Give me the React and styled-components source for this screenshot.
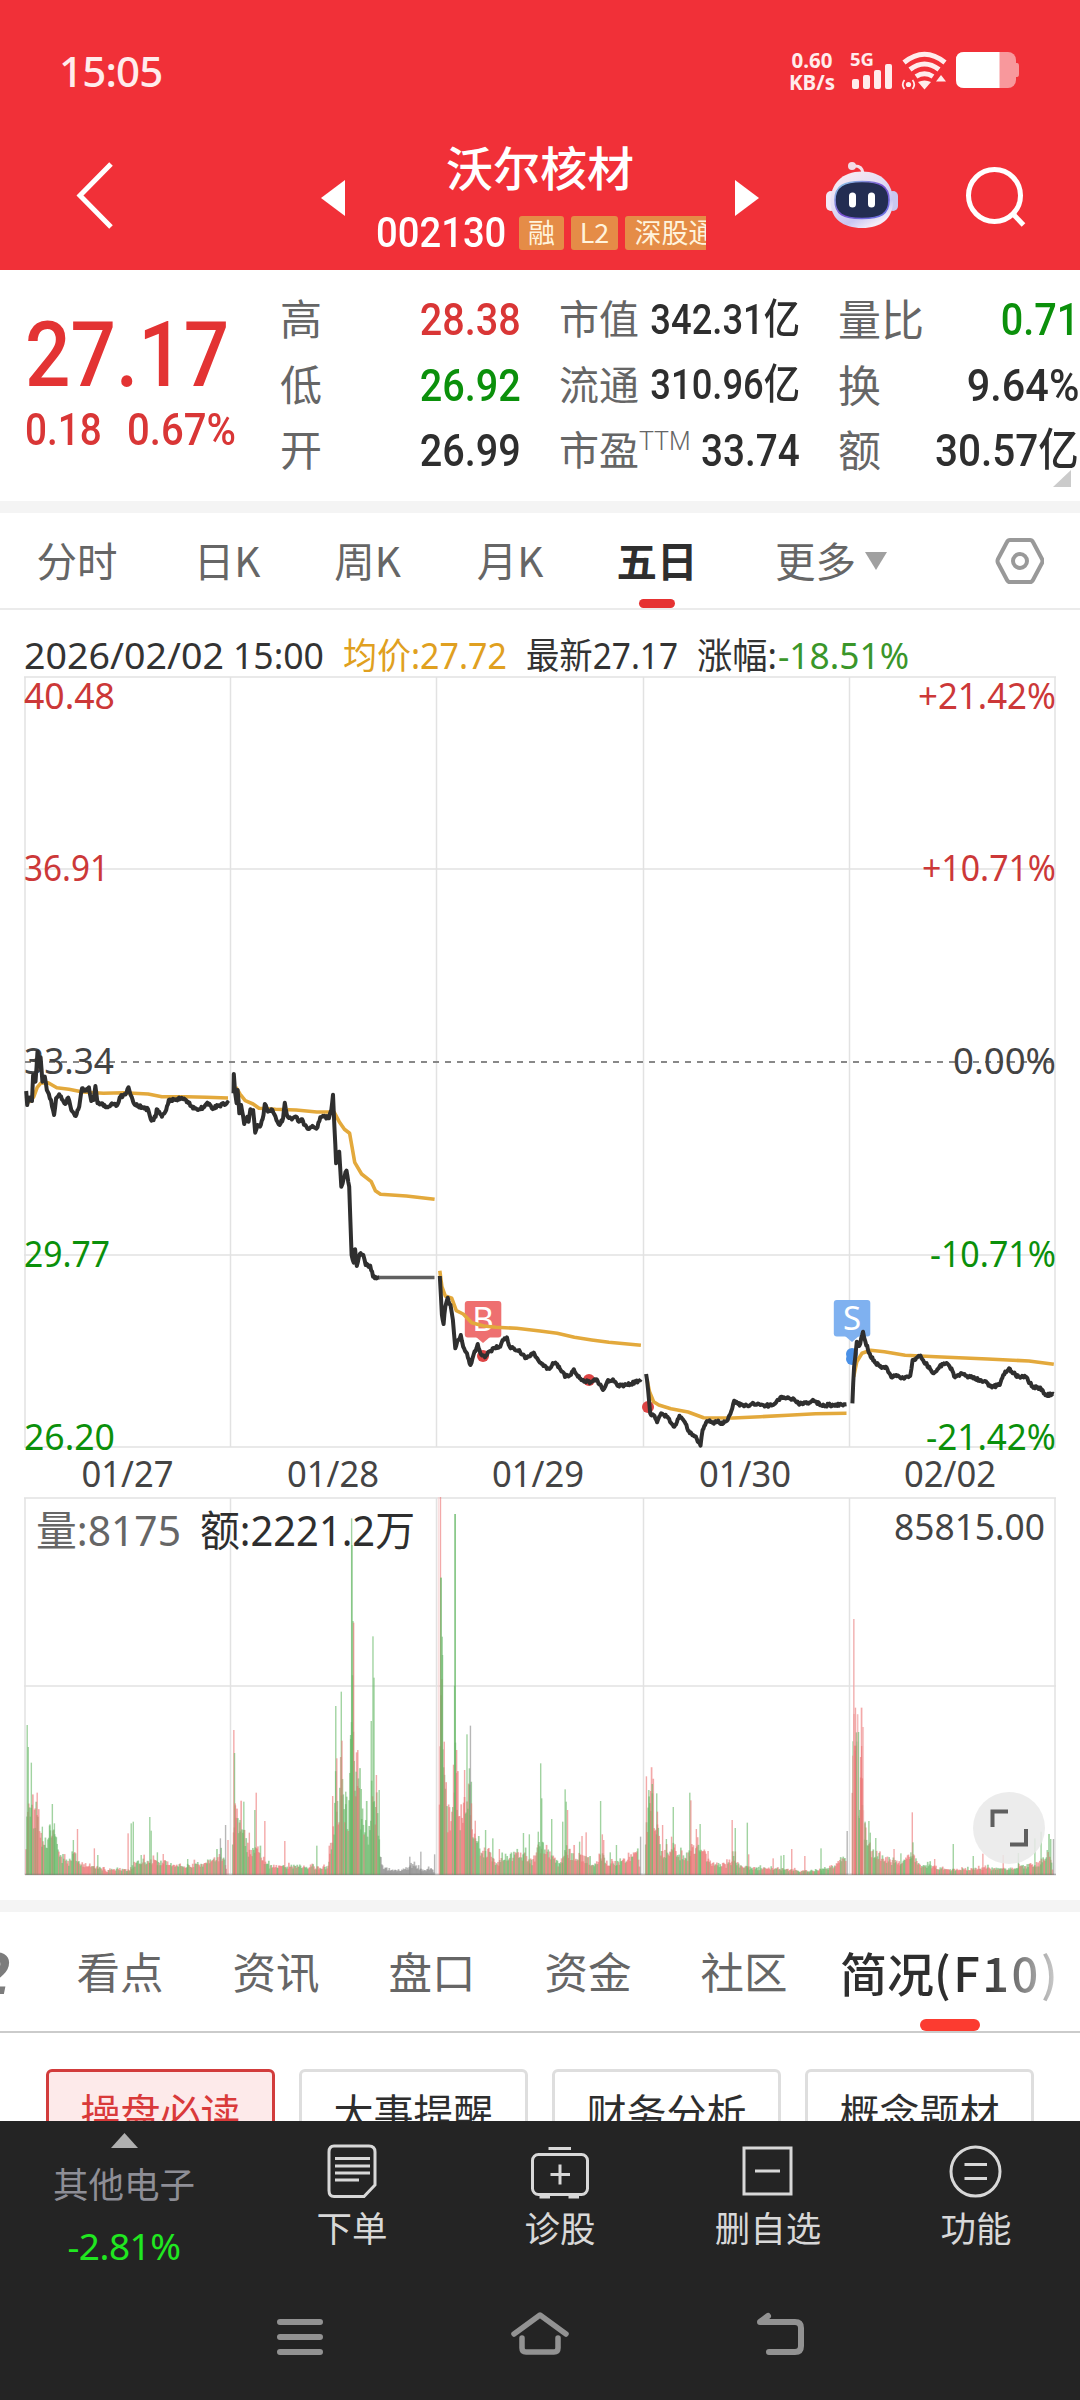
import styled, { createGlobalStyle, css } from 'styled-components'

const GlobalStyle = createGlobalStyle`
  * {
    box-sizing: border-box;
  }

  body {
    margin: 0;
    background: #fff;
    font-family: 'Noto Sans', 'Noto Sans CJK SC', sans-serif;
    color: #333;
  }
`

const RED = '#d93636'
const GREEN = '#0b900b'
const DARK = '#2e2e2e'

// ---------- shared ----------

// digits are narrower than Roboto, so numbers are squeezed horizontally
const Num = styled.span`
  display: inline-block;
  flex: none;
  white-space: nowrap;
  font-family: Roboto, 'Noto Sans CJK SC', sans-serif;
  font-weight: ${({ weight = 500 }) => weight};
  font-size: ${({ size = 45 }) => size}px;
  line-height: 1;
  color: ${({ color = 'inherit' }) => color};
  transform: scaleX(${({ squeeze = 0.88 }) => squeeze});
  transform-origin: ${({ origin = 'left' }) => origin} center;
`

const Page = styled.div`
  width: 1080px;
  height: 2400px;
  overflow: hidden;
  display: flex;
  flex-direction: column;
  background: #fff;
`

const Divider = styled.div`
  flex: none;
  height: 12px;
  background: #f4f4f4;
`

// ---------- header ----------

const Header = styled.header`
  flex: none;
  height: 270px;
  background: #f13038;
  color: #fff;
`

const StatusBar = styled.div`
  height: 122px;
  padding: 19px 60px 0 59px;
  display: flex;
  align-items: center;
  color: #ffecec;
`

const Clock = styled.div`
  width: 730px;
  font-size: 42px;
  font-weight: 500;
  line-height: 60px;
  letter-spacing: -0.8px;
`

const NetSpeed = styled.div`
  width: 46px;
  margin-right: 13px;
  font-size: 20.5px;
  font-weight: 700;
  line-height: 22px;
  text-align: center;
  white-space: nowrap;
`

const TitleBar = styled.div`
  height: 148px;
  display: grid;
  grid-template-columns: 321px 24px 31px 330px 29px 24px 66px 72px 67px 60px;
  align-items: start;
`

const BackIcon = styled.svg`
  margin: 38px 0 0 74px;
`

const StepIcon = styled.svg`
  margin-top: 58px;
`

const RobotIcon = styled.svg`
  margin-top: 38px;
`

const SearchIcon = styled.svg`
  margin-top: 42px;
`

const StockTitle = styled.div`
  text-align: center;
`

const StockName = styled.div`
  padding: 12px 2px 0 0;
  font-family: 'Noto Sans CJK SC', sans-serif;
  font-size: 47px;
  font-weight: 500;
  line-height: 64px;
`

const StockCode = styled.div`
  height: 38px;
  margin-top: 16px;
  padding-left: 0;
  display: flex;
  align-items: center;
  overflow: hidden;
`

const CodeCell = styled.div`
  flex: none;
  width: 143px;
  display: flex;
`

const Badge = styled.span`
  flex: none;
  width: ${({ width }) => width}px;
  height: 34px;
  margin-right: 7px;
  border-radius: 3px;
  background: #e58c47;
  color: #fff3dc;
  font-family: 'Noto Sans CJK SC', sans-serif;
  font-size: 27px;
  line-height: 32px;
  text-align: center;
  white-space: nowrap;
`

const StatusIcons = () => (
  <svg width="172" height="52" viewBox="849 46 172 52">
    <g fill="#ffecec">
      <text x="851" y="67" fontSize="17.500" fontWeight="700" textLength="24" lengthAdjust="spacingAndGlyphs">
        5G
      </text>
      <rect x="853" y="80" width="7" height="10" rx="2" />
      <rect x="864" y="76" width="7" height="14" rx="2" />
      <rect x="875" y="71" width="7" height="19" rx="2" />
      <rect x="886" y="65" width="7" height="25" rx="2" />
      <path d="M919 83Q925.500 80 932 83L925.500 90.500Z" />
      <path d="M942 76L947 82.500H937Z" />
      <circle cx="909.500" cy="85.500" r="2.600" />
    </g>
    <g fill="none" stroke="#ffecec" strokeWidth="5">
      <path d="M905 63.500Q925.500 47 946 63.500" />
      <path d="M911 70.500Q925.500 59.500 940 70.500" />
      <path d="M917 77.500Q925.500 72 934 77.500" />
      <path strokeWidth="1.700" d="M905.500 81Q902 85.500 905.500 90M913.500 81Q917 85.500 913.500 90" />
    </g>
    <rect x="957" y="53" width="60" height="36" rx="8" fill="#fff" fillOpacity="0.5" />
    <path d="M1017 64h1q2 0 2 3v8q0 3-2 3h-1z" fill="#fff" fillOpacity="0.5" />
    <path d="M965 53H1000.500V89H965Q957 89 957 81V61Q957 53 965 53Z" fill="#fff" />
  </svg>
)

const Robot = () => (
  <RobotIcon width="74" height="70" viewBox="824 160 74 70">
    <defs>
      <linearGradient id="shell" x1="0" y1="0" x2="0.6" y2="1">
        <stop offset="0" stopColor="#ffeef0" />
        <stop offset="0.5" stopColor="#e2dcf4" />
        <stop offset="0.8" stopColor="#c9c6f2" />
        <stop offset="1" stopColor="#f4ebf8" />
      </linearGradient>
      <linearGradient id="rim" x1="0" y1="0" x2="1" y2="1">
        <stop offset="0" stopColor="#8fd6ea" />
        <stop offset="0.5" stopColor="#7a4fd0" />
        <stop offset="1" stopColor="#6b7be8" />
      </linearGradient>
    </defs>
    <path d="M852 166Q861 165 862 173" fill="none" stroke="#f6dfe8" strokeWidth="3" />
    <circle cx="851" cy="166" r="4" fill="#f3dbe6" />
    <rect x="825" y="191" width="10" height="20" rx="5" fill="#f3e9f6" />
    <rect x="887" y="191" width="10" height="20" rx="5" fill="#c9c8f0" />
    <path d="M861 171.500C881 171.500 892 184 892 201C892 219 880 228 861 228C842 228 829.500 219 829.500 201C829.500 184 841 171.500 861 171.500Z" fill="url(#shell)" />
    <path d="M861 181.500C879 181.500 888 186 888 200C888 214 880 218.500 861 218.500C842 218.500 834 214 834 200C834 186 843 181.500 861 181.500Z" fill="#232d52" stroke="url(#rim)" strokeWidth="1.600" />
    <rect x="848" y="192.500" width="7" height="15" rx="3.500" fill="#fff" />
    <rect x="867" y="192.500" width="7" height="15" rx="3.500" fill="#fff" />
  </RobotIcon>
)

// ---------- quote ----------

const Quote = styled.section`
  flex: none;
  height: 231px;
  display: flex;
  padding-top: 17px;
`

const PriceBox = styled.div`
  width: 280px;
  padding: 24px 0 0 25px;
`

const PriceChange = styled.div`
  display: flex;
  margin-top: 6px;
`

const ChangeCell = styled.div`
  width: 102px;
`

const QuoteColumn = styled.div`
  width: 241px;
  margin-right: ${({ gap = 0 }) => gap}px;
`

const QuoteRow = styled.div`
  height: 65.5px;
  display: flex;
  align-items: center;
`

const QuoteLabel = styled.span`
  flex: none;
  display: flex;
  margin-top: -5px;
  font-family: 'Noto Sans CJK SC', sans-serif;
  font-size: ${({ size = 42 }) => size}px;
  line-height: 60px;
  color: #666;
`

const QuoteValue = styled.div`
  flex: 1;
  min-width: 0;
  display: flex;
  justify-content: flex-end;
`

const Super = styled.span`
  font-family: Roboto, sans-serif;
  font-size: 25px;
  font-weight: 300;
  line-height: 47px;
`

const CornerMark = styled.svg`
  display: block;
  margin: -14px 8px 0 auto;
`

const quoteColumns = [
  {
    gap: 38,
    labelSize: 42,
    rows: [
      { label: '高', value: '28.38', color: RED },
      { label: '低', value: '26.92', color: GREEN },
      { label: '开', value: '26.99' },
    ],
  },
  {
    gap: 38,
    labelSize: 40,
    rows: [
      { label: '市值', value: '342.31亿', size: 42, squeeze: 0.865 },
      { label: '流通', value: '310.96亿', size: 42, squeeze: 0.865 },
      { label: '市盈', sup: 'TTM', value: '33.74', squeeze: 0.86 },
    ],
  },
  {
    gap: 0,
    labelSize: 43,
    rows: [
      { label: '量比', value: '0.71', color: GREEN },
      { label: '换', value: '9.64%', squeeze: 0.92 },
      { label: '额', value: '30.57亿', squeeze: 0.9 },
    ],
  },
]

// ---------- period tabs ----------

const PeriodTabs = styled.nav`
  flex: none;
  height: 97px;
  display: flex;
  border-bottom: 2px solid #ebebeb;
  padding-left: 7px;
`

const PeriodTab = styled.div`
  width: ${({ width }) => width}px;
  display: flex;
  flex-direction: column;
  align-items: center;
  justify-content: space-between;
  padding-top: 17px;
  font-family: 'Noto Sans CJK SC', sans-serif;
  font-size: 40.5px;
  line-height: 60px;
  white-space: nowrap;
  color: #666;
  ${({ active }) =>
    active &&
    css`
      font-weight: 600;
      color: ${DARK};

      &::after {
        content: '';
        flex: none;
        width: 36px;
        height: 9px;
        border-radius: 5px;
        background: #e63232;
      }
    `}
`

const MoreArrow = styled.svg`
  margin: 39px 107px 0 9px;
`

const SettingsIcon = styled.svg`
  margin-top: 22px;
`

const periods = [
  { label: '分时', width: 140 },
  { label: '日K', width: 160 },
  { label: '周K', width: 121 },
  { label: '月K', width: 164 },
  { label: '五日', width: 130, active: true },
]

// ---------- chart ----------

const ChartBlock = styled.section`
  flex: none;
  height: 1290px;

  & svg {
    display: block;
  }
`

// Line points use a grid finer than the screen: 2.904 units per px across, 3 per px down
const UX = 2.9037
const toX = (x) => x / UX
const toY = (y) => 1000 + y / 3
const parse = (text, dx = 0, dy = 0) =>
  text.split(' ').map((pair) => {
    const [x, y] = pair.split(',').map(Number)
    return [x + dx, y + dy]
  })

const random = (seed) => () => {
  seed = (seed * 16807) % 2147483647
  return seed / 2147483647
}

const toPath = (points) => points.map(([x, y], i) => `${i ? 'L' : 'M'}${toX(x).toFixed(1)} ${toY(y).toFixed(1)}`).join('')

// minute-level jitter between the key points
const jagged = (points, seed) => {
  const next = random(seed)
  const result = []
  points.forEach(([x, y], i) => {
    result.push([x, y])
    const to = points[i + 1]
    if (!to) return
    const steps = Math.floor((to[0] - x) / 2.5)
    for (let s = 1; s < steps; s++) {
      const k = s / steps
      result.push([x + (to[0] - x) * k, y + (to[1] - y) * k + (next() - 0.5) * 9])
    }
  })
  return result
}

const RX = 1568
const RY = 720

const priceDays = [
  parse(
    '76,273 79,315 83,295 93,303 96,225 103,245 109,155 114,200 118,172 123,245 130,230 136,270 148,300 157,345 163,295 172,283 182,300 190,312 198,293 207,330 220,348 230,320 238,265 248,272 258,262 265,303 272,300 277,258 283,310 295,310 313,322 325,310 340,316 350,290 365,283 373,262 382,290 392,315 415,322 430,328 440,362 452,350 455,328 470,350 480,335 490,300 510,300 525,295 540,300 555,318 575,330 590,322 602,308 615,325 635,316 663,310'
  ),
  parse(
    '678,280 679,222 683,280 687,310 690,270 695,340 700,315 709,372 718,350 722,365 727,328 735,330 741,398 748,375 755,380 765,345 769,312 778,335 788,328 800,350 812,375 822,355 827,308 833,345 845,355 860,350 868,365 875,358 885,375 895,387 910,380 922,382 930,352 945,350 955,355 962,330 967,284 971,380 976,490 985,455 991,560 998,535 1006,512 1014,560 1021,765 1027,788 1031,748 1036,798 1045,762 1055,765 1062,795 1075,797 1083,830 1102,832'
  ),
  [
    ...parse(
      '1277,828 1283,945 1288,972 1293,920 1300,893 1308,915 1315,960 1322,1045 1330,1020 1338,1005 1345,1040 1356,1060 1366,1095 1375,1065 1387,1032 1395,1060 1408,1072 1420,1055 1435,1045 1450,1040 1465,1015 1472,1012 1480,1040 1495,1050 1510,1055 1525,1075 1540,1068 1550,1058 1560,1075'
    ),
    ...parse('0,368 10,378 25,385 35,375 45,368 60,390 75,410 90,405 98,388 110,410 128,425 150,425 165,418 183,450 195,425 212,418 225,437 245,435 265,432 293,418', RX, RY),
  ],
  parse(
    '308,402 314,450 320,520 330,525 340,547 352,520 370,530 390,560 405,527 420,545 435,580 450,588 466,617 472,570 485,543 500,548 515,545 530,552 545,540 555,515 564,482 575,492 600,496 620,490 640,495 665,497 685,488 700,470 715,475 735,475 750,490 775,490 795,483 820,498 850,494 890,493',
    RX,
    RY
  ),
  parse(
    '907,490 912,380 920,305 927,318 938,275 945,305 960,350 975,370 990,382 1003,380 1020,412 1035,405 1050,415 1075,408 1082,360 1105,347 1120,370 1143,400 1160,380 1178,370 1195,385 1205,412 1220,402 1245,410 1280,420 1315,440 1335,435 1345,405 1362,385 1375,400 1390,410 1410,410 1430,440 1450,443 1470,465 1492,462',
    RX,
    RY
  ),
]

const averageDays = [
  parse('76,290 85,305 98,290 108,262 118,250 140,248 165,263 200,268 240,276 300,280 360,278 430,282 470,290 540,290 600,292 662,294'),
  parse('685,262 697,282 712,302 735,312 752,325 800,328 860,330 920,336 970,336 985,365 1000,388 1015,400 1022,440 1030,487 1050,522 1078,545 1090,572 1105,583 1180,588 1262,598'),
  [
    ...parse('1277,812 1283,860 1293,888 1312,895 1325,932 1345,942 1370,968 1405,978 1440,982 1500,985'),
    ...parse('0,273 50,280 100,292 150,300 200,307 293,316', RX, RY),
  ],
  parse('311,420 318,455 330,485 345,495 380,506 430,516 475,533 560,534 640,530 720,526 800,521 890,520', RX, RY),
  parse('911,410 920,365 935,340 960,331 1000,335 1060,346 1150,350 1300,357 1420,363 1492,373', RX, RY),
]

const gridX = [25, 230.5, 436.5, 643.5, 849.5, 1055]
const priceLevels = [
  { price: '40.48', change: '+21.42%', y: 709, color: '#cc3838', w: 91, cw: 138 },
  { price: '36.91', change: '+10.71%', y: 881, color: '#cc3838', w: 85, cw: 134 },
  { price: '33.34', change: '0.00%', y: 1074, color: '#444', w: 90, cw: 103 },
  { price: '29.77', change: '-10.71%', y: 1267, color: GREEN, w: 86, cw: 126 },
  { price: '26.20', change: '-21.42%', y: 1450, color: GREEN, w: 91, cw: 130 },
]
const dates = [
  ['01/27', 127.5],
  ['01/28', 333],
  ['01/29', 538],
  ['01/30', 745],
  ['02/02', 950],
]
const legend = [
  { text: '2026/02/02', x: 24, w: 200, color: '#333' },
  { text: '15:00', x: 233, w: 91, color: '#333' },
  { text: '均价:27.72', x: 343, w: 164, color: '#e0a020' },
  { text: '最新27.17', x: 526, w: 152, color: '#333' },
  { text: '涨幅:', x: 697, w: 80, color: '#333' },
  { text: '-18.51%', x: 778, w: 131, color: '#3a962a' },
]

const ChartText = styled.text`
  font-family: 'Noto Sans', 'Noto Sans CJK SC', sans-serif;
  font-size: ${({ $size = 36 }) => $size}px;
`

const Label = ({ x, y, w, color = '#444', size, anchor, children }) => (
  <ChartText x={x} y={y} fill={color} $size={size} textAnchor={anchor} textLength={w} lengthAdjust="spacingAndGlyphs">
    {children}
  </ChartText>
)

const Flag = ({ x, y, color, letter }) => (
  <g>
    <rect x={x - 18.2} y={y} width="36.500" height="36.500" rx="3" fill={color} />
    <path d={`M${x - 7} ${y + 36}L${x} ${y + 42}L${x + 7} ${y + 36}Z`} fill={color} />
    <ChartText x={x} y={y + 30} $size={33} fill="#fff" textAnchor="middle">
      {letter}
    </ChartText>
  </g>
)

const PriceChart = () => (
  <svg width="1080" height="887" viewBox="0 610 1080 887">
    {legend.map(({ text, x, w, color }) => (
      <Label key={text} x={x} y={668.5} w={w} color={color} size={36}>
        {text}
      </Label>
    ))}
    <g stroke="#e9e9e9" strokeWidth="1.500">
      {[677, 869, 1255, 1447].map((y) => (
        <line key={y} x1="24" x2="1056" y1={y} y2={y} strokeWidth="2" />
      ))}
      {gridX.map((x) => (
        <line key={x} x1={x} x2={x} y1="677" y2="1447" stroke="#e2e2e2" />
      ))}
    </g>
    <line x1="25" x2="1055" y1="1062" y2="1062" stroke="#888" strokeWidth="2" strokeDasharray="6 6" />
    {priceLevels.map(({ price, change, y, color, w, cw }) => (
      <g key={price}>
        <Label x={24} y={y} w={w} color={color}>
          {price}
        </Label>
        <Label x={1056} y={y} w={cw} color={color} anchor="end">
          {change}
        </Label>
      </g>
    ))}
    <Flag x={483} y={1301} color="#ee7070" letter="B" />
    <Flag x={852} y={1300} color="#7fb1f0" letter="S" />
    <g fill="#dd4444">
      <circle cx="483" cy="1356" r="6" />
      <circle cx="589" cy="1380" r="6" />
      <circle cx="648" cy="1407" r="6" />
    </g>
    <g fill="#4a90e6">
      <circle cx="852" cy="1354" r="6" />
      <circle cx="852" cy="1359" r="6" />
    </g>
    {averageDays.map((day, i) => (
      <path key={i} d={toPath(day)} fill="none" stroke="#e3a93c" strokeWidth="3.600" strokeLinejoin="round" />
    ))}
    {priceDays.map((day, i) => (
      <path key={i} d={toPath(jagged(day, 71 + i))} fill="none" stroke="#2f2f2f" strokeWidth="4" strokeLinejoin="round" />
    ))}
    <line x1="379" x2="434.500" y1="1277.500" y2="1277.500" stroke="#606060" strokeWidth="3.600" />
    {dates.map(([date, x]) => (
      <Label key={date} x={x} y={1487} w={92} anchor="middle">
        {date}
      </Label>
    ))}
  </svg>
)

// envelope: "x,height"; spikes: "x,height,tone" (g green, r red, n neutral, l light)
const volumeDays = [
  {
    tones: [[75, 0.5], [160, 0.35], [215, 0.5], [230, 0.9], [300, 0.6], [330, 0.7], [400, 0.3], [440, 0.75], [540, 0.35], [590, 0.6], [660, 0.6]],
    envelope:
      '76,110 82,200 95,180 108,205 120,110 135,95 150,120 160,130 170,60 200,35 215,80 230,35 280,25 310,12 330,18 375,15 400,40 430,45 450,40 490,35 540,28 590,35 620,45 650,60 658,12',
    spikes:
      '79,450,g 82,384,g 91,337,g 108,247,r 102,200,r 152,213,g 158,155,g 145,152,g 123,145,g 213,105,g 225,138,r 274,80,r 284,60,g 372,125,r 381,155,g 387,160,g 410,60,g 435,174,g 439,133,g 457,68,g 474,63,r 545,48,g 655,150,n 640,110,n 662,105,r',
  },
  {
    tones: [[676, 0.6], [705, 0.3], [750, 0.7], [790, 0.5], [835, 0.5], [870, 0.3], [910, 0.7], [965, 0.35], [1025, 0.3], [1050, 0.2], [1090, 0.3]],
    envelope:
      '676,130 682,200 695,150 705,140 720,80 735,70 745,90 757,60 780,28 830,25 870,28 900,22 950,22 965,100 975,220 985,160 992,260 1003,190 1010,150 1018,380 1025,380 1035,290 1048,190 1060,160 1072,110 1080,280 1088,180 1095,240 1103,70 1110,25 1140,12 1180,20 1200,30 1230,12 1255,20 1260,10',
    spikes:
      '679,435,r 681,366,g 683,215,r 708,220,g 697,165,g 724,127,r 744,247,r 740,195,g 769,162,r 827,102,r 920,88,g 956,88,r 966,237,r 975,507,g 978,350,r 991,550,g 993,403,r 1004,250,g 1018,420,g 1021,1070,g 1022,990,g 1025,762,g 1027,757,r 1039,375,r 1034,310,g 1049,258,g 1078,462,g 1083,716,g 1086,592,g 1093,300,r 1101,255,g 1190,55,n 1222,70,n 1262,62,n',
  },
  {
    tones: [[1276, 0.4], [1300, 0.35], [1330, 0.6], [1345, 0.4], [1370, 0.8], [1390, 0.4], [1430, 0.7], [1470, 0.35], [1520, 0.6], [1568, 0.5], [1600, 0.7], [1625, 0.2], [1640, 0.5], [1690, 0.7], [1720, 0.4], [1745, 0.6], [1800, 0.6], [1840, 0.8]],
    envelope:
      '1276,300 1282,600 1290,320 1300,170 1312,200 1322,360 1330,190 1345,180 1356,230 1366,240 1375,120 1395,65 1420,70 1440,30 1470,55 1490,60 1520,60 1545,40 1568,90 1580,90 1600,60 1625,30 1645,80 1660,60 1690,55 1710,45 1725,22 1745,65 1765,32 1800,40 1830,50 1852,70 1858,12',
    spikes:
      '1273,1134,l 1279,1134,r 1280,892,g 1281,892,g 1284,715,g 1285,660,g 1290,400,r 1321,1083,g 1322,1083,g 1320,568,g 1326,375,r 1349,315,r 1356,422,g 1363,320,g 1366,448,n 1369,215,r 1380,163,r 1410,135,g 1431,110,g 1450,78,r 1520,126,g 1537,122,g 1563,130,g 1570,335,g 1573,230,g 1602,168,g 1634,160,g 1641,257,g 1644,220,g 1648,195,r 1683,100,g 1690,117,r 1702,128,r 1744,222,g 1749,122,r 1753,105,r 1772,68,g 1790,90,g 1860,115,n',
  },
  {
    tones: [[1875, 0.35], [1915, 0.6], [1935, 0.4], [1958, 0.8], [1995, 0.4], [2010, 0.6], [2025, 0.4], [2055, 0.8], [2130, 0.6], [2170, 0.4], [2200, 0.5], [2290, 0.6], [2370, 0.4], [2420, 0.6]],
    envelope:
      '1875,130 1881,190 1893,220 1903,130 1910,150 1918,70 1943,70 1956,110 1968,50 1998,60 2008,90 2028,80 2038,90 2058,40 2108,30 2133,50 2148,25 2188,20 2268,18 2328,12 2368,15 2428,28 2453,70 2458,12',
    spikes:
      '1877,296,r 1884,255,g 1889,252,r 1894,273,g 1907,245,g 1909,190,r 1924,150,r 1935,108,g 1955,204,g 1950,115,r 2003,247,g 2006,224,r 2022,138,r 2033,153,g 2056,72,r 2126,165,r 2135,141,g 2170,157,g 2174,62,r 2245,50,r 2268,58,g 2276,60,g 2299,78,r 2337,57,r 2384,80,g 2460,132,n',
  },
  {
    tones: [[2475, 0.7], [2491, 0.4], [2498, 0.9], [2512, 0.3], [2560, 0.5], [2650, 0.6], [2690, 0.4], [2730, 0.7], [2760, 0.4], [2800, 0.7], [2850, 0.65], [2940, 0.3], [3000, 0.6], [3040, 0.4]],
    envelope:
      '2475,350 2488,370 2494,180 2501,340 2508,150 2518,100 2533,70 2568,50 2608,35 2653,60 2668,30 2718,25 2748,15 2848,20 2918,18 2968,25 3018,35 3048,80 3056,12',
    spikes:
      '2477,358,r 2479,768,r 2480,768,l 2482,388,r 2484,502,r 2490,482,r 2491,482,l 2493,429,g 2499,354,r 2502,387,r 2506,444,r 2507,444,l 2504,290,r 2523,162,g 2527,127,g 2543,111,g 2512,160,g 2596,78,r 2616,65,g 2649,188,r 2651,98,g 2645,68,g 2714,48,r 2768,93,g 2826,57,g 2854,64,r 2913,60,r 2957,66,g 3005,110,g 3023,130,g 3051,108,g 3059,108,n',
  },
]

const tones = { g: '#67b867', r: '#ec7474', n: '#8a8a8a', l: '#f6cfcf' }

const at = (points, x) => {
  const i = points.findIndex(([px]) => px >= x)
  if (i < 1) return points[i === 0 ? 0 : points.length - 1][1]
  const [x0, y0] = points[i - 1]
  const [x1, y1] = points[i]
  return y0 + ((y1 - y0) * (x - x0)) / (x1 - x0)
}

const volumeBars = volumeDays.flatMap(({ envelope, spikes, tones: mix }, day) => {
  const points = parse(envelope)
  const next = random(907 + day * 31)
  const bars = []
  const end = points[points.length - 1][0]
  for (let x = points[0][0]; x <= end; x += 2.43) {
    const height = at(points, x) * (0.7 + next() * 0.5 + (next() > 0.9 ? 0.4 : 0))
    const idle = day === 1 && x > 1104
    bars.push([x, height, idle ? 'n' : next() < at(mix, x) ? 'r' : 'g', 1.7])
  }
  spikes.split(' ').forEach((spike) => {
    const [x, height, tone] = spike.split(',')
    bars.push([Number(x), Number(height), tone, 1.4])
  })
  return bars
})

const VolumeChart = () => (
  <svg width="1080" height="403" viewBox="0 1497 1080 403">
    <g stroke="#e9e9e9" strokeWidth="2">
      {[1498, 1686, 1874].map((y) => (
        <line key={y} x1="24" x2="1056" y1={y} y2={y} />
      ))}
      {gridX.map((x) => (
        <line key={x} x1={x} x2={x} y1="1498" y2="1875" stroke="#e2e2e2" strokeWidth="1.500" />
      ))}
    </g>
    <Label x={36} y={1546} w={145} size={42} color="#666">
      量:8175
    </Label>
    <Label x={200} y={1546} w={215} size={42} color={DARK}>
      额:2221.2万
    </Label>
    <Label x={1045} y={1539.5} w={151} anchor="end">
      85815.00
    </Label>
    {volumeBars.map(([x, height, tone, width], i) => (
      <rect key={i} x={toX(x) - width / 2} y={1875 - height / 3} width={width} height={height / 3} fill={tones[tone]} fillOpacity="0.62" />
    ))}
    <line x1="25" x2="1056" y1="1874.500" y2="1874.500" stroke="#777" strokeOpacity="0.5" strokeWidth="1.500" />
    <circle cx="1009" cy="1828" r="36" fill="#e9e9e9" fillOpacity="0.86" />
    <path d="M992.500 1827V1811.500H1008M1026 1829V1844.500H1010" fill="none" stroke="#5f5f5f" strokeWidth="4" />
  </svg>
)

// ---------- content tabs ----------

const ContentTabs = styled.nav`
  flex: none;
  height: 121px;
  display: flex;
  border-bottom: 2px solid #cbcbcb;
  overflow: hidden;
  font-family: 'Noto Sans CJK SC', sans-serif;
`

const CutTab = styled.div`
  width: 42px;
  height: 110px;
  display: flex;
  justify-content: flex-end;
  padding: 20px 32px 0 0;
  font-family: 'Noto Sans', sans-serif;
  font-size: 58px;
  font-style: italic;
  font-weight: 700;
  line-height: 80px;
  color: #7c7c7c;
`

const ContentTab = styled.div`
  width: 156px;
  padding-top: 27px;
  font-size: 43.5px;
  line-height: 64px;
  text-align: center;
  white-space: nowrap;
  color: #666;
`

const ActiveTab = styled.div`
  flex: 1;
  padding: 26px 0 0 18px;
  display: flex;
  flex-direction: column;
  justify-content: space-between;
  font-size: 47px;
  font-weight: 500;
  line-height: 68px;
  white-space: nowrap;
  color: ${DARK};

  & span {
    background: linear-gradient(90deg, #2e2e2e 145px, #d0d0d0 218px);
    background-clip: text;
    -webkit-text-fill-color: transparent;
  }

  & em {
    font-style: normal;
    letter-spacing: 2.5px;
  }

  &::after {
    content: '';
    flex: none;
    width: 60px;
    height: 12px;
    margin-left: 80px;
    border-radius: 6px;
    background: #fc3b30;
  }
`

const SubTabs = styled.div`
  flex: none;
  height: 88px;
  padding: 36px 0 0 46px;
  display: flex;
  gap: 24px;
  overflow: hidden;
`

const SubTab = styled.div`
  flex: none;
  width: 229px;
  height: 86px;
  padding-top: 7px;
  border: 3px solid ${({ active }) => (active ? '#d23c3c' : '#dedede')};
  border-radius: 6px;
  background: ${({ active }) => (active ? '#fdeaea' : '#fff')};
  color: ${({ active }) => (active ? '#d93a3a' : DARK)};
  font-family: 'Noto Sans CJK SC', sans-serif;
  font-size: 40px;
  line-height: 64px;
  text-align: center;
`

// ---------- bottom bars ----------

const BottomBar = styled.footer`
  flex: none;
  height: 152px;
  display: flex;
  background: #242424;
  color: #d8d8d8;
`

const Sector = styled.div`
  width: 248px;
  padding-top: 12px;
  display: flex;
  flex-direction: column;
  align-items: center;
`

const SectorName = styled.div`
  margin-top: 9px;
  font-family: 'Noto Sans CJK SC', sans-serif;
  font-size: 35.5px;
  line-height: 52px;
  color: #8e8e96;
`

const SectorChange = styled.div`
  margin-top: 11px;
  font-size: 37px;
  line-height: 52px;
  letter-spacing: -0.5px;
  color: #20e820;
`

const Action = styled.div`
  width: 208px;
  padding-top: 22px;
  display: flex;
  flex-direction: column;
  align-items: center;
  font-family: 'Noto Sans CJK SC', sans-serif;
  font-size: 35.5px;
  line-height: 51px;
`

const ActionIcon = ({ children }) => (
  <svg width="60" height="58" viewBox="0 0 60 58" fill="none" stroke="#d8d8d8" strokeWidth="3">
    {children}
  </svg>
)

const actions = [
  {
    label: '下单',
    icon: (
      <>
        <path d="M12 3H47Q53 3 53 9V42L42 53.500H12Q7 53.500 7 47.500V9Q7 3 12 3Z" />
        <path d="M13 15.500H48M13 23H48M13 30H48M13 37H37" />
      </>
    ),
  },
  {
    label: '诊股',
    icon: (
      <>
        <rect x="2.500" y="11.500" width="55" height="40" rx="6" />
        <path d="M18.500 5.500H41M20.500 31.500H40M30 21.500V41.500" />
        <path d="M9.500 53.500H20M38.500 53.500H49" strokeWidth="4" />
      </>
    ),
  },
  {
    label: '删自选',
    icon: (
      <>
        <rect x="6" y="5" width="47" height="46" />
        <path d="M17 28H42" />
      </>
    ),
  },
  {
    label: '功能',
    icon: (
      <>
        <circle cx="29.500" cy="28.500" r="24.500" />
        <path d="M18.500 21.500H41M18.500 35.500H41" />
      </>
    ),
  },
]

const SystemNav = styled.div`
  flex: none;
  height: 127px;
  background: #242424;
  display: flex;
  justify-content: center;
  align-items: flex-start;
  gap: 180px;
  padding-top: 36px;
`

const App = () => (
  <Page>
    <GlobalStyle />
    <Header>
      <StatusBar>
        <Clock>15:05</Clock>
        <NetSpeed>
          0.60
          <br />
          KB/s
        </NetSpeed>
        <StatusIcons />
      </StatusBar>
      <TitleBar>
        <BackIcon width="44" height="72" viewBox="74 160 44 72">
          <path d="M111 164L80 195.500L111 227" fill="none" stroke="#fff" strokeWidth="5" />
        </BackIcon>
        <StepIcon width="24" height="36" viewBox="0 0 24 36">
          <path d="M24 0V36L0 18Z" fill="#fff" />
        </StepIcon>
        <div />
        <StockTitle>
          <StockName>沃尔核材</StockName>
          <StockCode>
            <CodeCell>
              <Num size={42} squeeze={0.91}>
                002130
              </Num>
            </CodeCell>
            <Badge width={45}>融</Badge>
            <Badge width={47}>L2</Badge>
            <Badge width={100}>深股通</Badge>
          </StockCode>
        </StockTitle>
        <div />
        <StepIcon width="24" height="36" viewBox="0 0 24 36">
          <path d="M0 0V36L24 18Z" fill="#fff" />
        </StepIcon>
        <div />
        <Robot />
        <div />
        <SearchIcon width="64" height="64" viewBox="964 165 64 64">
          <circle cx="994.500" cy="196.500" r="26" fill="none" stroke="#fff" strokeWidth="5" />
          <path d="M1013 215L1023.500 226" stroke="#fff" strokeWidth="5" />
        </SearchIcon>
      </TitleBar>
    </Header>

    <Quote>
      <PriceBox>
        <Num size={90} color="#e33333" squeeze={0.89}>
          27.17
        </Num>
        <PriceChange>
          <ChangeCell>
            <Num color={RED} squeeze={0.86}>
              0.18
            </Num>
          </ChangeCell>
          <Num color={RED} squeeze={0.89}>
            0.67%
          </Num>
        </PriceChange>
      </PriceBox>
      {quoteColumns.map(({ gap, labelSize, rows }, i) => (
        <QuoteColumn key={i} gap={gap}>
          {rows.map(({ label, sup, value, color = DARK, size, squeeze }) => (
            <QuoteRow key={label}>
              <QuoteLabel size={labelSize}>
                {label}
                {sup && <Super>{sup}</Super>}
              </QuoteLabel>
              <QuoteValue>
                <Num color={color} size={size} squeeze={squeeze} origin="right">
                  {value}
                </Num>
              </QuoteValue>
            </QuoteRow>
          ))}
          {i === 2 && (
            <CornerMark width="18" height="17">
              <path d="M18 0V17H0Z" fill="#cbcbcb" />
            </CornerMark>
          )}
        </QuoteColumn>
      ))}
    </Quote>
    <Divider />

    <PeriodTabs>
      {periods.map(({ label, width, active }) => (
        <PeriodTab key={label} width={width} active={active}>
          {label}
        </PeriodTab>
      ))}
      <PeriodTab width={53} />
      <PeriodTab width={81}>更多</PeriodTab>
      <MoreArrow width="22" height="18">
        <path d="M0 0H22L11 18Z" fill="#a0a0a0" />
      </MoreArrow>
      <SettingsIcon width="50" height="50" viewBox="994 535 50 50" fill="none" stroke="#999" strokeWidth="4">
        <path d="M1010 540H1030Q1032 540 1033 542L1042 559Q1043 561 1042 563L1033 580Q1032 582 1030 582H1010Q1008 582 1007 580L998 563Q997 561 998 559L1007 542Q1008 540 1010 540Z" />
        <circle cx="1020" cy="561" r="7" />
      </SettingsIcon>
    </PeriodTabs>

    <ChartBlock>
      <PriceChart />
      <VolumeChart />
    </ChartBlock>
    <Divider />

    <ContentTabs>
      <CutTab>2</CutTab>
      {['看点', '资讯', '盘口', '资金', '社区'].map((label) => (
        <ContentTab key={label}>{label}</ContentTab>
      ))}
      <ActiveTab>
        <span>
          简况<em>(F10)</em>
        </span>
      </ActiveTab>
    </ContentTabs>

    <SubTabs>
      <SubTab active>操盘必读</SubTab>
      <SubTab>大事提醒</SubTab>
      <SubTab>财务分析</SubTab>
      <SubTab>概念题材</SubTab>
    </SubTabs>

    <BottomBar>
      <Sector>
        <svg width="27" height="15">
          <path d="M13.500 0L27 15H0Z" fill="#b0b0b0" />
        </svg>
        <SectorName>其他电子</SectorName>
        <SectorChange>-2.81%</SectorChange>
      </Sector>
      {actions.map(({ label, icon }) => (
        <Action key={label}>
          <ActionIcon>{icon}</ActionIcon>
          {label}
        </Action>
      ))}
    </BottomBar>

    <SystemNav>
      <svg width="60" height="50" viewBox="0 0 60 50" fill="none" stroke="#929292" strokeWidth="6" strokeLinecap="round">
        <path d="M10 13H50M10 28H50M10 43H50" />
      </svg>
      <svg width="60" height="50" viewBox="0 0 60 50" fill="none" stroke="#929292" strokeWidth="5.500" strokeLinecap="round" strokeLinejoin="round">
        <path d="M4 25L30 6L56 25M12 29V39Q12 43 16 43H44Q48 43 48 39V29" />
      </svg>
      <svg width="60" height="50" viewBox="0 0 60 50" fill="none" stroke="#929292" strokeWidth="6" strokeLinecap="round" strokeLinejoin="round">
        <path d="M19 43H45Q51 43 51 37V19Q51 13 45 13H10L18 7" />
      </svg>
    </SystemNav>
  </Page>
)

export default App
